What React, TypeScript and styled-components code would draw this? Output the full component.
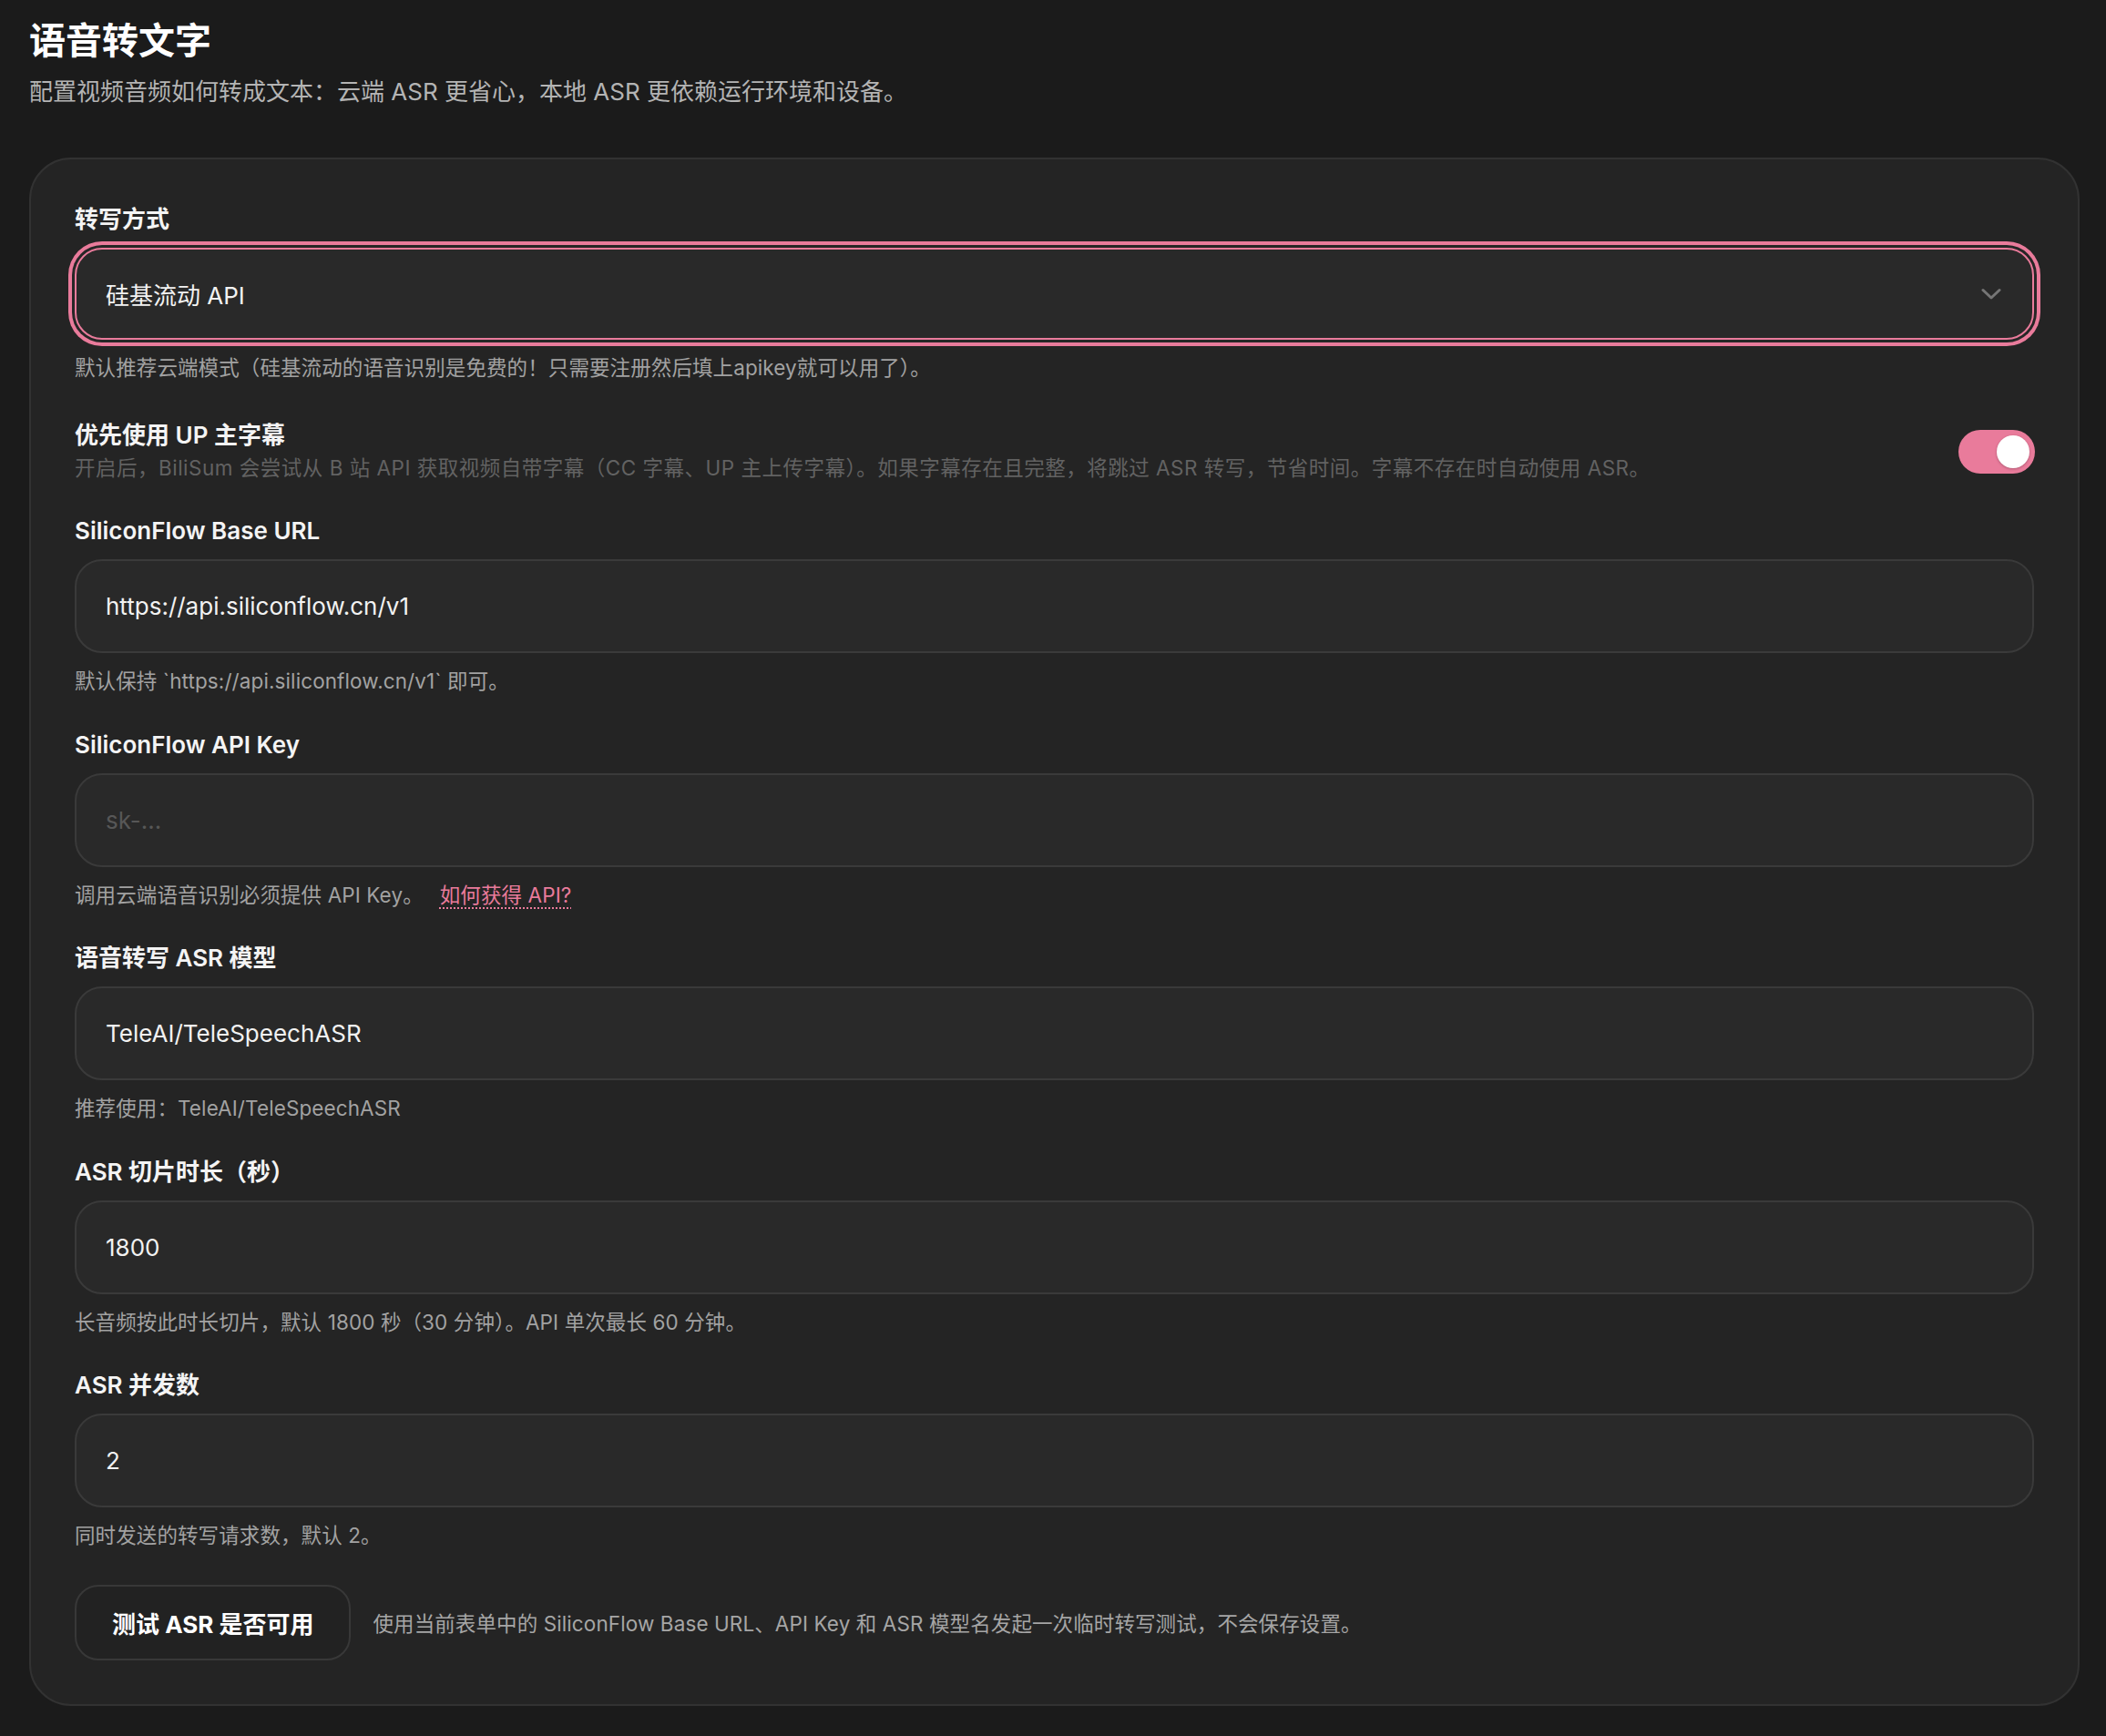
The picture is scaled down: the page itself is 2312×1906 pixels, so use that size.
import React, { useState } from "react";
import styled, { createGlobalStyle } from "styled-components";

const GlobalStyle = createGlobalStyle`
  html, body {
    margin: 0;
    padding: 0;
    background: #1b1b1b;
  }
  body {
    font-family: Inter, "Noto Sans CJK SC", "Noto Sans", sans-serif;
    color: #f2f2f2;
    -webkit-font-smoothing: antialiased;
  }
  * { box-sizing: border-box; }
`;

const ACCENT = "#e97b9b";

const Page = styled.main`
  min-height: 1906px;
  padding: 17px 29px 33px 32px;
  background: #1b1b1b;
`;

const Header = styled.header`
  display: flex;
  flex-direction: column;
  gap: 10px;
  margin-bottom: 54px;
`;

const Title = styled.h1`
  margin: 0;
  font-size: 40px;
  line-height: 56px;
  font-weight: 700;
  color: #ffffff;
`;

const Subtitle = styled.p`
  margin: 0;
  font-size: 26px;
  line-height: 36px;
  color: #b4b4b4;
`;

const Card = styled.section`
  display: flex;
  flex-direction: column;
  gap: 37.5px;
  padding: 50px 48px 48px 48px;
  border: 2px solid #323232;
  border-radius: 46px;
  background: #242424;
`;

const Field = styled.div`
  display: flex;
  flex-direction: column;
  gap: 15px;
`;

const Label = styled.label`
  font-size: 26px;
  line-height: 32px;
  font-weight: 600;
  color: #f4f4f4;
`;

const Hint = styled.div<{ $muted?: boolean }>`
  font-size: 22.5px;
  line-height: 32px;
  letter-spacing: ${(p) => (p.$muted ? "0.5px" : "0.1px")};
  color: ${(p) => (p.$muted ? "#626262" : "#a2a2a2")};
`;

const SelectBox = styled.div`
  position: relative;
  display: flex;
  align-items: center;
  justify-content: space-between;
  height: 101px;
  padding: 0 34px 0 32px;
  border: 2px solid ${ACCENT};
  border-radius: 30px;
  background: #292929;
  box-shadow: 0 0 0 3px #262626, 0 0 0 7px ${ACCENT};
  font-size: 26px;
  color: #f2f2f2;
  cursor: pointer;
`;

const Input = styled.input`
  height: 103px;
  padding: 0 32px;
  border: 2px solid #3a3a3a;
  border-radius: 30px;
  background: #292929;
  font-family: inherit;
  font-size: 26px;
  color: #f2f2f2;
  outline: none;

  &::placeholder {
    color: #575757;
  }
`;

const ToggleRow = styled.div`
  display: flex;
  align-items: center;
  justify-content: space-between;
  gap: 32px;
  padding-top: 4px;
`;

const ToggleText = styled.div`
  display: flex;
  flex-direction: column;
  gap: 4px;
`;

const Switch = styled.button<{ $on: boolean }>`
  position: relative;
  flex: none;
  width: 84px;
  height: 48px;
  margin-right: -1px;
  border: none;
  border-radius: 24px;
  padding: 0;
  background: ${(p) => (p.$on ? ACCENT : "#444")};
  cursor: pointer;
`;

const Knob = styled.span<{ $on: boolean }>`
  position: absolute;
  top: 6px;
  left: ${(p) => (p.$on ? "42px" : "6px")};
  width: 36px;
  height: 36px;
  border-radius: 50%;
  background: #ffffff;
  box-shadow: 0 1px 3px rgba(0, 0, 0, 0.25);
`;

const HelpLink = styled.a`
  margin-left: 18px;
  color: ${ACCENT};
  text-decoration: underline dotted;
  text-underline-offset: 6px;
  text-decoration-thickness: 2px;
`;

const ActionRow = styled.div`
  display: flex;
  align-items: center;
  gap: 24px;
`;

const TestButton = styled.button`
  height: 83px;
  padding: 0 39px;
  border: 2px solid #383838;
  border-radius: 26px;
  background: #222222;
  font-family: inherit;
  font-size: 26px;
  font-weight: 700;
  color: #ffffff;
  cursor: pointer;
`;

const ActionNote = styled.span`
  font-size: 22.5px;
  letter-spacing: 0.1px;
  color: #a6a6a6;
`;

const Chevron = () => (
  <svg width="22" height="14" viewBox="0 0 22 14" fill="none">
    <path d="M2 2.5 L11 11 L20 2.5" stroke="#767676" strokeWidth="3" strokeLinecap="round" strokeLinejoin="round" />
  </svg>
);

export default function App() {
  const [useUpSubs, setUseUpSubs] = useState(true);

  return (
    <>
      <GlobalStyle />
      <Page>
        <Header>
          <Title>语音转文字</Title>
          <Subtitle>配置视频音频如何转成文本：云端 ASR 更省心，本地 ASR 更依赖运行环境和设备。</Subtitle>
        </Header>

        <Card>
          <Field>
            <Label>转写方式</Label>
            <SelectBox>
              <span>硅基流动 API</span>
              <Chevron />
            </SelectBox>
            <Hint>默认推荐云端模式（硅基流动的语音识别是免费的！只需要注册然后填上apikey就可以用了）。</Hint>
          </Field>

          <ToggleRow>
            <ToggleText>
              <Label>优先使用 UP 主字幕</Label>
              <Hint $muted>
                开启后，BiliSum 会尝试从 B 站 API 获取视频自带字幕（CC 字幕、UP 主上传字幕）。如果字幕存在且完整，将跳过 ASR 转写，节省时间。字幕不存在时自动使用 ASR。
              </Hint>
            </ToggleText>
            <Switch $on={useUpSubs} onClick={() => setUseUpSubs((v) => !v)} aria-pressed={useUpSubs}>
              <Knob $on={useUpSubs} />
            </Switch>
          </ToggleRow>

          <Field>
            <Label>SiliconFlow Base URL</Label>
            <Input defaultValue="https://api.siliconflow.cn/v1" />
            <Hint>默认保持 `https://api.siliconflow.cn/v1` 即可。</Hint>
          </Field>

          <Field>
            <Label>SiliconFlow API Key</Label>
            <Input placeholder="sk-..." />
            <Hint>
              调用云端语音识别必须提供 API Key。
              <HelpLink href="#">如何获得 API?</HelpLink>
            </Hint>
          </Field>

          <Field>
            <Label>语音转写 ASR 模型</Label>
            <Input defaultValue="TeleAI/TeleSpeechASR" />
            <Hint>推荐使用：TeleAI/TeleSpeechASR</Hint>
          </Field>

          <Field>
            <Label>ASR 切片时长（秒）</Label>
            <Input defaultValue="1800" />
            <Hint>长音频按此时长切片，默认 1800 秒（30 分钟）。API 单次最长 60 分钟。</Hint>
          </Field>

          <Field>
            <Label>ASR 并发数</Label>
            <Input defaultValue="2" />
            <Hint>同时发送的转写请求数，默认 2。</Hint>
          </Field>

          <ActionRow>
            <TestButton>测试 ASR 是否可用</TestButton>
            <ActionNote>使用当前表单中的 SiliconFlow Base URL、API Key 和 ASR 模型名发起一次临时转写测试，不会保存设置。</ActionNote>
          </ActionRow>
        </Card>
      </Page>
    </>
  );
}
